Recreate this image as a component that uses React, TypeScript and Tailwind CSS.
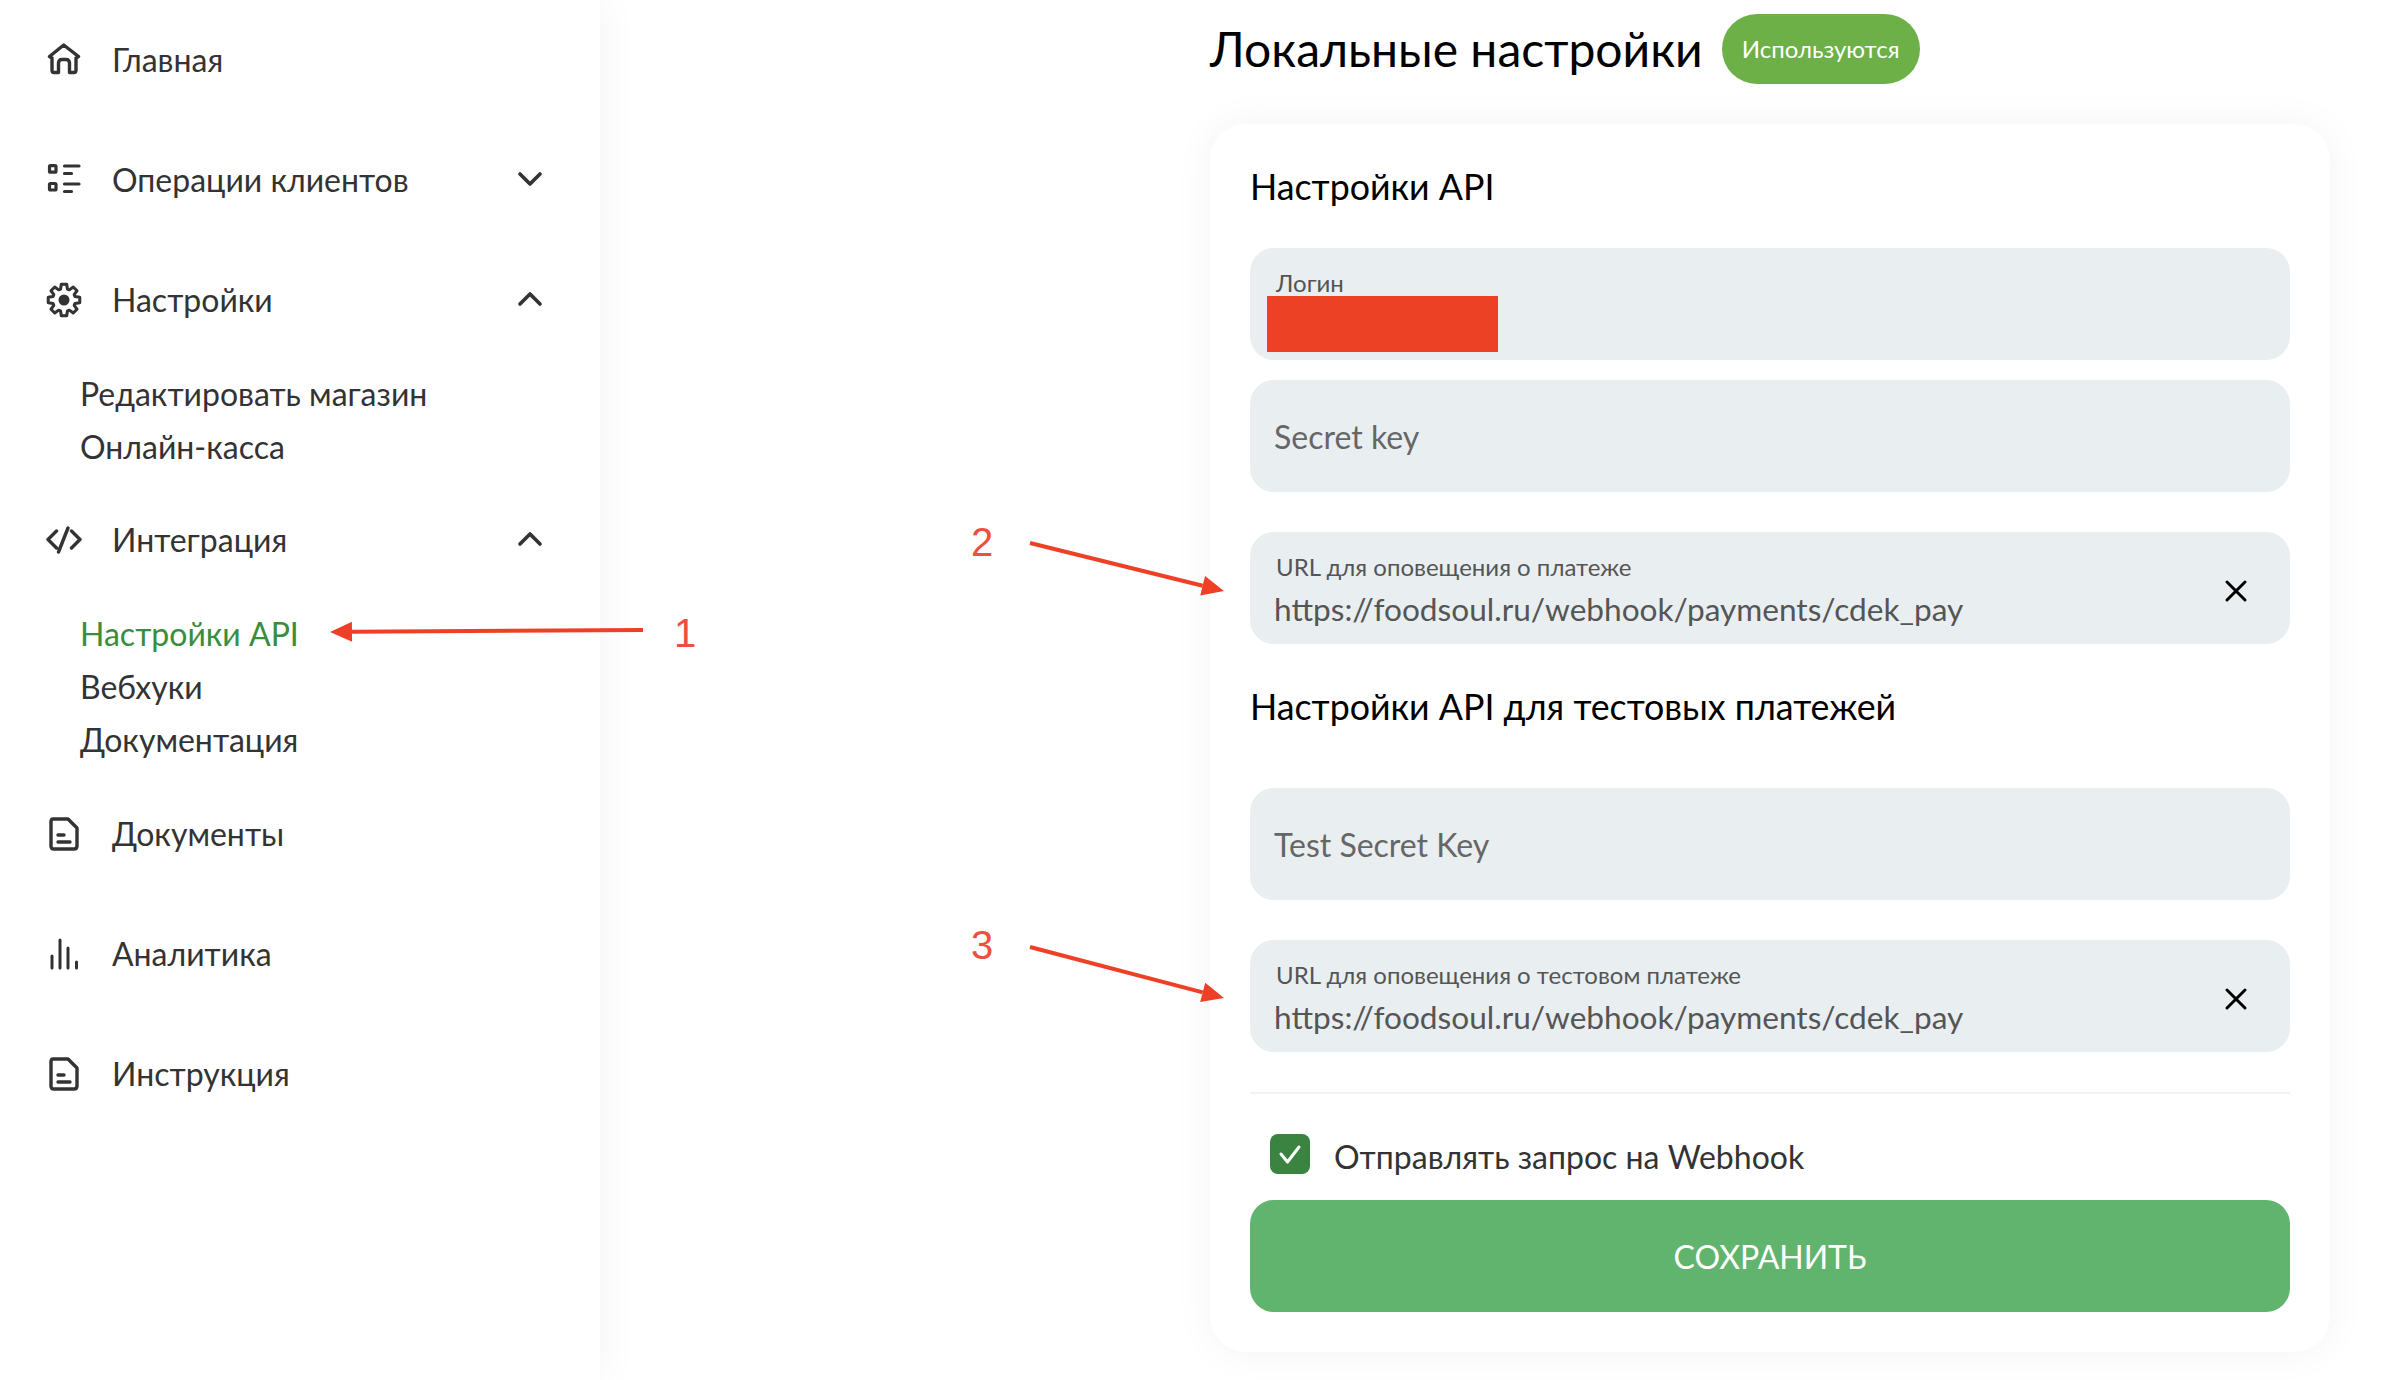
import React from "react";
import { ChevronDown, ChevronUp } from "lucide-react";

const HomeIcon = () => (
  <svg width="36" height="34" viewBox="0 0 36 34" fill="none" stroke="#333" strokeWidth="3.400" strokeLinejoin="round" strokeLinecap="round">
    <path d="M17.700 2 L32.500 13.500 L30 15 V27 Q30 29.500 28 29.500 H23.500 V20 Q23.500 16.500 20 16.500 H16 Q12.500 16.500 12.500 20 V29.500 H8 Q6 29.500 6 27 V15 L3.500 13.500 Z" />
  </svg>
);
const ListIcon = () => (
  <svg width="36" height="32" viewBox="0 0 36 32" fill="none" stroke="#333" strokeWidth="3.200" strokeLinecap="round">
    <rect x="3.500" y="1.700" width="6.500" height="6.500" rx="1" />
    <rect x="3.500" y="19.500" width="6.500" height="6.500" rx="1" />
    <path d="M18.500 2 H33 M18.500 9.500 H25.500 M18.500 20 H33 M18.500 27.500 H25.500" />
  </svg>
);
const gearPath = () => {
  const cx = 18, cy = 18, R = 16, r = 11.5;
  const pts: string[] = [];
  for (let i = 0; i < 8; i++) {
    const a = (i * Math.PI) / 4 - Math.PI / 2;
    [[a - 0.3, r], [a - 0.17, R], [a + 0.17, R], [a + 0.3, r]].forEach(([t, d]) => {
      pts.push(`${(cx + d * Math.cos(t)).toFixed(2)} ${(cy + d * Math.sin(t)).toFixed(2)}`);
    });
  }
  return "M" + pts.join(" L") + " Z";
};
const GearIcon = () => (
  <svg width="36" height="36" viewBox="0 0 36 36" fill="none" stroke="#333" strokeWidth="3" strokeLinejoin="round">
    <path d={gearPath()} />
    <circle cx="18" cy="18" r="5.500" fill="#333" stroke="none" />
  </svg>
);
const CodeIcon = () => (
  <svg width="36" height="32" viewBox="0 0 36 32" fill="none" stroke="#333" strokeWidth="3.400" strokeLinecap="round" strokeLinejoin="round">
    <path d="M10.500 7 L2 15.500 L10.500 24 M25.500 7 L34 15.500 L25.500 24 M22 4 L12.500 28" />
  </svg>
);
const DocIcon = () => (
  <svg width="30" height="34" viewBox="0 0 30 34" fill="none" stroke="#333" strokeWidth="3.400" strokeLinecap="round" strokeLinejoin="round">
    <path d="M4 2 H19 L28 11 V29 Q28 32 25 32 H5 Q2 32 2 29 V5 Q2 2 4 2 Z" />
    <path d="M9 18 H15 M9 25 H21" />
  </svg>
);
const BarsIcon = () => (
  <svg width="30" height="32" viewBox="0 0 30 32" fill="none" stroke="#333" strokeWidth="3" strokeLinecap="round">
    <path d="M3 18 V30 M11 2 V30 M19 10 V30 M27.500 24 V30" />
  </svg>
);

const NavRow = ({ icon, label, chevron }: { icon: React.ReactNode; label: string; chevron?: "up" | "down" }) => (
  <div className="flex h-[120px] items-center">
    <div className="mr-[16px] flex w-[64px] shrink-0 justify-center">{icon}</div>
    <span className="flex-1">{label}</span>
    {chevron === "down" && <ChevronDown size={40} strokeWidth={2.200} className="mb-[2px] mr-[50px] text-[#333]" />}
    {chevron === "up" && <ChevronUp size={40} strokeWidth={2.200} className="mb-[2px] mr-[50px] text-[#333]" />}
  </div>
);

const SubItem = ({ label, active }: { label: string; active?: boolean }) => (
  <div className={"h-[53px] pl-[48px] leading-[51px] " + (active ? "text-[#388e3c]" : "")}>{label}</div>
);

const CloseIcon = () => (
  <svg width="24" height="24" viewBox="0 0 24 24" fill="none" stroke="#000" strokeWidth="3" strokeLinecap="round" className="mt-[6px] shrink-0">
    <path d="M3 3 L21 21 M21 3 L3 21" />
  </svg>
);

const UrlField = ({ label, value }: { label: string; value: string }) => (
  <div className="flex h-[112px] items-center rounded-[24px] bg-[#e9eef0] pl-[24px] pr-[42px]">
    <div className="flex-1 pt-[4px]">
      <div className="pl-[2px] text-[24px] leading-[30px] text-[#555]">{label}</div>
      <div className="mt-[7px] text-[31.6px] leading-[40px] text-[#555]">{value}</div>
    </div>
    <CloseIcon />
  </div>
);

const PlainField = ({ placeholder }: { placeholder: string }) => (
  <div className="flex h-[112px] items-center rounded-[24px] bg-[#e9eef0] pl-[24px] pt-[2px] text-[32px] text-[#666]">{placeholder}</div>
);

const Arrow = ({ x1, y1, x2, y2 }: { x1: number; y1: number; x2: number; y2: number }) => {
  const a = Math.atan2(y2 - y1, x2 - x1);
  const l = 22, w = 10;
  const bx = x2 - l * Math.cos(a), by = y2 - l * Math.sin(a);
  const p = `${x2},${y2} ${bx - w * Math.sin(a)},${by + w * Math.cos(a)} ${bx + w * Math.sin(a)},${by - w * Math.cos(a)}`;
  return (
    <>
      <line x1={x1} y1={y1} x2={bx} y2={by} stroke="#ee4026" strokeWidth="4" />
      <polygon points={p} fill="#ee4026" />
    </>
  );
};

export default function App() {
  return (
    <div className="relative flex h-[1380px] w-[2382px] overflow-hidden bg-white font-['Lato','Noto_Sans',sans-serif] text-[#333]">
      <aside className="z-10 w-[600px] shrink-0 bg-white pl-[32px] text-[32px] shadow-[0_0_40px_rgba(0,0,0,0.05)]">
        <NavRow icon={<HomeIcon />} label="Главная" />
        <NavRow icon={<ListIcon />} label="Операции клиентов" chevron="down" />
        <NavRow icon={<GearIcon />} label="Настройки" chevron="up" />
        <div className="pb-[6px] pt-[8px]">
          <SubItem label="Редактировать магазин" />
          <SubItem label="Онлайн-касса" />
        </div>
        <NavRow icon={<CodeIcon />} label="Интеграция" chevron="up" />
        <div className="pb-[7px] pt-[8px]">
          <SubItem label="Настройки API" active />
          <SubItem label="Вебхуки" />
          <SubItem label="Документация" />
        </div>
        <NavRow icon={<DocIcon />} label="Документы" />
        <NavRow icon={<BarsIcon />} label="Аналитика" />
        <NavRow icon={<DocIcon />} label="Инструкция" />
      </aside>

      <main className="flex-1 pl-[610px] pt-[14px]">
        <div className="flex h-[70px] items-center">
          <h1 className="text-[48px] leading-[70px] text-black">Локальные настройки</h1>
          <span className="ml-[19px] flex h-[70px] w-[198px] items-center justify-center rounded-[35px] bg-[#6cb047] text-[24px] text-white">Используются</span>
        </div>

        <section className="mt-[40px] h-[1228px] w-[1120px] rounded-[36px] bg-white px-[40px] pt-[40px] shadow-[0_0_40px_rgba(0,0,0,0.05)]">
          <h2 className="h-[46px] text-[35.75px] leading-[46px] text-black">Настройки API</h2>
          <div className="relative mt-[38px] h-[112px] rounded-[24px] bg-[#e9eef0] pl-[26px] pt-[20px]">
            <div className="text-[24px] leading-[30px] text-[#555]">Логин</div>
            <div className="-ml-[9px] -mt-[2px] h-[56px] w-[231px] bg-[#ec4125]" />
          </div>
          <div className="mt-[20px]"><PlainField placeholder="Secret key" /></div>
          <div className="mt-[40px]"><UrlField label="URL для оповещения о платеже" value="https://foodsoul.ru/webhook/payments/cdek_pay" /></div>
          <h2 className="mt-[40px] h-[46px] text-[35.75px] leading-[46px] text-black">Настройки API для тестовых платежей</h2>
          <div className="mt-[58px]"><PlainField placeholder="Test Secret Key" /></div>
          <div className="mt-[40px]"><UrlField label="URL для оповещения о тестовом платеже" value="https://foodsoul.ru/webhook/payments/cdek_pay" /></div>
          <div className="mt-[40px] h-[2px] bg-[#f1f2f3]" />
          <div className="mt-[40px] flex h-[40px] items-center pl-[20px]">
            <span className="flex h-[40px] w-[40px] items-center justify-center rounded-[8px] bg-[#3a8341]">
              <svg width="24" height="24" viewBox="0 0 24 24" fill="none" stroke="#fff" strokeWidth="3" strokeLinecap="round" strokeLinejoin="round">
                <path d="M3 12 L9.500 20 L21 5" />
              </svg>
            </span>
            <span className="ml-[24px] mt-[6px] text-[32px] leading-[40px]">Отправлять запрос на Webhook</span>
          </div>
          <button className="mt-[26px] flex h-[112px] w-full items-center justify-center rounded-[24px] bg-[#61b46e] pt-[2px] text-[32px] text-white">СОХРАНИТЬ</button>
        </section>
      </main>

      <svg width="2382" height="1380" className="pointer-events-none absolute left-0 top-0 z-20">
        <Arrow x1={643} y1={630} x2={330} y2={632} />
        <Arrow x1={1030} y1={543} x2={1224} y2={591} />
        <Arrow x1={1030} y1={947} x2={1224} y2={998} />
      </svg>
      <span className="absolute left-[674px] top-[609px] z-20 font-['Liberation_Sans',sans-serif] text-[40px] leading-[48px] text-[#f04e3e]">1</span>
      <span className="absolute left-[971px] top-[518px] z-20 font-['Liberation_Sans',sans-serif] text-[40px] leading-[48px] text-[#f04e3e]">2</span>
      <span className="absolute left-[971px] top-[921px] z-20 font-['Liberation_Sans',sans-serif] text-[40px] leading-[48px] text-[#f04e3e]">3</span>
    </div>
  );
}
